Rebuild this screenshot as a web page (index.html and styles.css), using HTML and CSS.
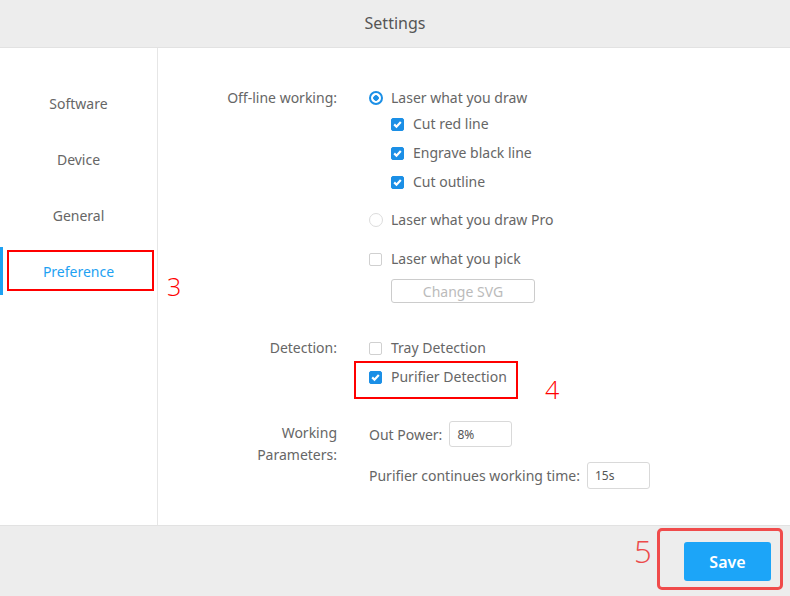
FILE: index.html
```html
<!DOCTYPE html>
<html>
  <head>
    <title>Settings</title>
    <link rel="stylesheet" href="styles.css">
  </head>
  <body>
    <div class="dialog">
      <header class="title-bar">Settings</header>
      <div class="body">
        <nav class="side-nav">
          <a class="nav-item" href="#">Software</a>
          <a class="nav-item" href="#">Device</a>
          <a class="nav-item" href="#">General</a>
          <a class="nav-item active marked" href="#">Preference<span class="step step-3">3</span></a>
        </nav>
        <main class="content">
          <section class="field offline">
            <div class="field-label">Off-line working:</div>
            <div class="field-controls">
              <label class="option"><span class="radio checked"></span>Laser what you draw</label>
              <div class="sub-options">
                <label class="option"><span class="check checked"></span>Cut red line</label>
                <label class="option"><span class="check checked"></span>Engrave black line</label>
                <label class="option"><span class="check checked"></span>Cut outline</label>
              </div>
              <label class="option pro"><span class="radio"></span>Laser what you draw Pro</label>
              <label class="option pick"><span class="check"></span>Laser what you pick</label>
              <button class="btn-svg" disabled>Change SVG</button>
            </div>
          </section>

          <section class="field detection">
            <div class="field-label">Detection:</div>
            <div class="field-controls stack">
              <label class="option"><span class="check"></span>Tray Detection</label>
              <label class="option marked purifier"><span class="check checked"></span>Purifier Detection<span class="step step-4">4</span></label>
            </div>
          </section>

          <section class="field params">
            <div class="field-label two-line">Working<br>Parameters:</div>
            <div class="field-controls">
              <div class="param-row">Out Power: <input type="text" class="param-input" value="8%"></div>
              <div class="param-row time">Purifier continues working time: <input type="text" class="param-input" value="15s"></div>
            </div>
          </section>
        </main>
      </div>
      <footer class="footer">
        <div class="save-wrap marked">
          <span class="step step-5">5</span>
          <button class="btn-save">Save</button>
        </div>
      </footer>
    </div>
  </body>
</html>
```

FILE: styles.css
```css
html, body {
  margin: 0;
  padding: 0;
  font: normal 14px "Noto Sans", "Open Sans", Arial, sans-serif;
  color: #666;
  background: #fff;
}

.dialog {
  display: flex;
  flex-direction: column;
  width: 790px;
  height: 596px;
  overflow: hidden;
}

.title-bar {
  height: 47px;
  line-height: 46px;
  text-align: center;
  font-size: 16px;
  color: #555;
  background: #ededed;
  border-bottom: 1px solid #e2e2e2;
}

.body {
  display: flex;
  flex: 1;
}

/* left menu */
.side-nav {
  display: flex;
  flex-direction: column;
  gap: 8px;
  width: 157px;
  padding-top: 31px;
  border-right: 1px solid #e6e6e6;
}

.nav-item {
  position: relative;
  height: 48px;
  line-height: 49px;
  text-align: center;
  color: #666;
  text-decoration: none;
}

.nav-item.active {
  color: #1ea1f2;
  box-shadow: inset 3px 0 0 #1ea1f2;
}

/* red annotation frames */
.marked { position: relative; }

.nav-item.marked::after {
  content: "";
  position: absolute;
  left: 7px;
  top: 3px;
  right: 3px;
  bottom: 4px;
  border: 2px solid #f00;
}

.step {
  position: absolute;
  font-family: "Open Sans", Arial, sans-serif;
  font-weight: 300;
  color: #f00;
  line-height: 1;
}

.step-3 { left: 167px; top: 27px; font-size: 25px; }
.step-4 { left: 176px; top: 10px; font-size: 25px; }
.step-5 { left: -26px; top: 5px; font-size: 31px; color: #ec4a4a; }

/* right pane */
.content {
  flex: 1;
  padding-top: 40px;
}

.field {
  display: grid;
  grid-template-columns: 179px 1fr;
  column-gap: 32px;
}

.field-label {
  text-align: right;
  line-height: 20px;
}

.field-label.two-line {
  line-height: 22px;
  padding-top: 1px;
}

.field-controls {
  display: flex;
  flex-direction: column;
  align-items: flex-start;
}

.stack { gap: 9px; }

.detection { margin-top: 35px; }
.params { margin-top: 34px; }

.option {
  display: flex;
  align-items: center;
  height: 20px;
  line-height: 20px;
  white-space: nowrap;
}

.sub-options {
  display: flex;
  flex-direction: column;
  gap: 9px;
  margin: 6px 0 0 22px;
}

.option.pro { margin-top: 18px; }
.option.pick { margin-top: 19px; }

.radio {
  box-sizing: border-box;
  width: 14px;
  height: 14px;
  margin-right: 8px;
  border: 1px solid #dcdcdc;
  border-radius: 50%;
  background: #fff;
}

.radio.checked {
  border: 2px solid #1b8fe6;
  background: radial-gradient(circle, #1b8fe6 0 2.5px, #fff 3px);
}

.check {
  box-sizing: border-box;
  width: 13px;
  height: 13px;
  margin-right: 9px;
  border: 1px solid #d0d0d0;
  border-radius: 2px;
  background: #fff;
}

.check.checked {
  border-color: #1b8fe6;
  background: #1b8fe6 url("data:image/svg+xml,%3Csvg xmlns='http://www.w3.org/2000/svg' viewBox='0 0 13 13'%3E%3Cpath d='M3.2 6.4l2.3 2.3 4.3-4.6' fill='none' stroke='%23fff' stroke-width='2.2'/%3E%3C/svg%3E") center / 13px 13px no-repeat;
}

.btn-svg {
  width: 144px;
  height: 24px;
  margin: 10px 0 0 22px;
  padding: 0;
  font: normal 14px "Noto Sans", "Open Sans", Arial, sans-serif;
  color: #bbb;
  background: #fff;
  border: 1px solid #ccc;
  border-radius: 3px;
}

.purifier::after {
  content: "";
  position: absolute;
  left: -15px;
  top: -6px;
  width: 164px;
  height: 38px;
  border: 2px solid #f00;
  box-sizing: border-box;
}

.param-row {
  display: flex;
  align-items: center;
  gap: 7px;
  height: 26px;
  white-space: nowrap;
}

.param-row.time {
  margin-top: 15px;
  height: 27px;
}

.param-input {
  box-sizing: border-box;
  width: 63px;
  height: 100%;
  padding: 0 7px;
  font: normal 12px "Noto Sans", "Open Sans", Arial, sans-serif;
  color: #555;
  border: 1px solid #d9d9d9;
  border-radius: 3px;
}

/* bottom bar */
.footer {
  display: flex;
  justify-content: flex-end;
  align-items: flex-start;
  height: 68px;
  padding: 2px 7px 0 0;
  background: #ededed;
  border-top: 1px solid #e2e2e2;
}

.save-wrap {
  display: flex;
  align-items: center;
  box-sizing: border-box;
  width: 126px;
  height: 62px;
  padding-left: 24px;
  border: 3px solid #f04b4b;
  border-radius: 5px;
}

.btn-save {
  width: 87px;
  height: 39px;
  margin-top: 5px;
  font: 600 16px "Noto Sans", "Open Sans", Arial, sans-serif;
  color: #fff;
  background: #1ca5f8;
  border: none;
  border-radius: 3px;
}
```
